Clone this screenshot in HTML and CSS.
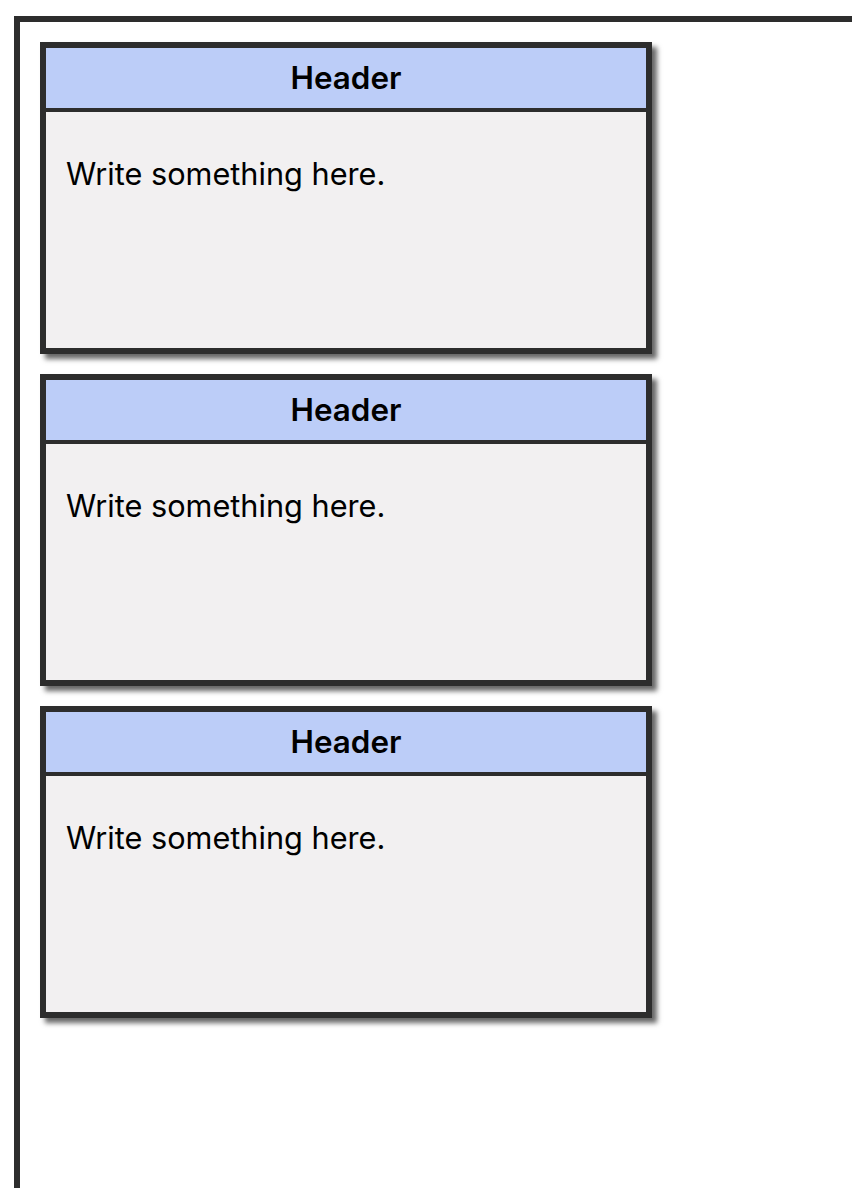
FILE: index.html
```html
<!DOCTYPE html>
<html>
<head>
    <title>Cards</title>
    <link rel="stylesheet" href="styles.css">
</head>
<body>
    <div class="frame">
        <div class="card">
            <div class="card-header">Header</div>
            <div class="card-body">
                <p>Write something here.</p>
            </div>
        </div>

        <div class="card">
            <div class="card-header">Header</div>
            <div class="card-body">
                <p>Write something here.</p>
            </div>
        </div>

        <div class="card">
            <div class="card-header">Header</div>
            <div class="card-body">
                <p>Write something here.</p>
            </div>
        </div>
    </div>
</body>
</html>
```

FILE: styles.css
```css
html, body {
    margin: 0;
    padding: 0;
    background-color: white;
    overflow: hidden;
}
body {
    font-family: Inter, 'Liberation Sans', sans-serif;
    color: #000;
}
.frame {
    margin: 16px 0 0 14px;
    border-top: 6px solid #2d2d2d;
    border-left: 6px solid #2d2d2d;
    min-height: 1200px;
    padding: 20px 0 0 20px;
    display: flex;
    flex-direction: column;
    gap: 20px;
}
.card {
    width: 612px;
    height: 312px;
    box-sizing: border-box;
    border: 6px solid #2d2d2d;
    background-color: #f2f0f1;
    box-shadow: 5px 5px 5px rgba(0,0,0,0.6);
    display: flex;
    flex-direction: column;
}
.card-header {
    height: 60px;
    line-height: 60px;
    background-color: #bccdf8;
    border-bottom: 4px solid #2d2d2d;
    text-align: center;
    font-size: 31.4px;
    font-weight: 600;
}
.card-body {
    flex: 1;
    padding: 0 20px;
}
.card-body p {
    margin: 44px 0 0 0;
    font-size: 30.7px;
    line-height: 36px;
}
```
